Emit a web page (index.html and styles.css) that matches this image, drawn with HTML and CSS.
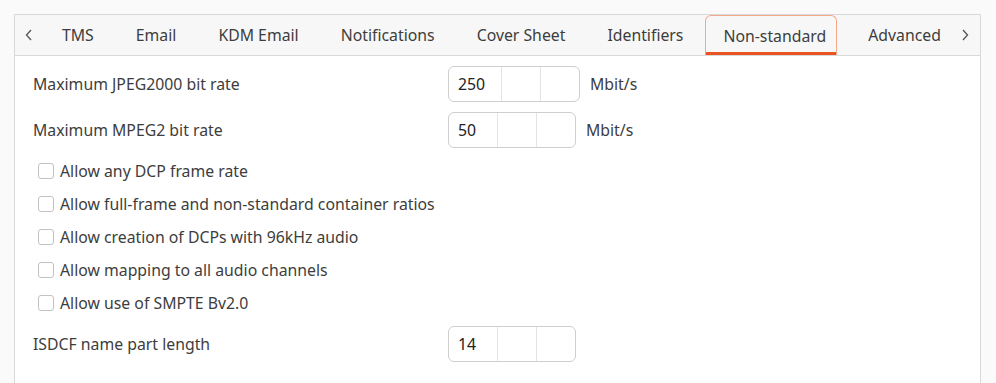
FILE: index.html
```html
<!DOCTYPE html>
<html lang="en">
<head>
  <meta charset="UTF-8" />
  <title>Preferences - Non-standard</title>
  <link rel="stylesheet" href="styles.css">
</head>
<body>
  <div class="notebook">
    <div class="tab-bar">
      <span class="scroll-arrow">
        <svg width="10" height="12" viewBox="0 0 10 12"><path d="M7 1 L2.5 6 L7 11" fill="none" stroke="#5a5a5a" stroke-width="1.4"/></svg>
      </span>
      <ul class="tabs">
        <li class="tab">TMS</li>
        <li class="tab">Email</li>
        <li class="tab">KDM Email</li>
        <li class="tab">Notifications</li>
        <li class="tab">Cover Sheet</li>
        <li class="tab">Identifiers</li>
        <li class="tab active">Non-standard</li>
        <li class="tab">Advanced</li>
      </ul>
      <span class="scroll-arrow right">
        <svg width="10" height="12" viewBox="0 0 10 12"><path d="M3 1 L7.5 6 L3 11" fill="none" stroke="#5a5a5a" stroke-width="1.4"/></svg>
      </span>
    </div>

    <div class="page">
      <div class="spin-row">
        <label class="field-label">Maximum JPEG2000 bit rate</label>
        <div class="spin wide">
          <span class="spin-entry">250</span>
          <span class="spin-btn"></span>
          <span class="spin-btn"></span>
        </div>
        <span class="unit">Mbit/s</span>
      </div>
      <div class="spin-row">
        <label class="field-label">Maximum MPEG2 bit rate</label>
        <div class="spin">
          <span class="spin-entry">50</span>
          <span class="spin-btn"></span>
          <span class="spin-btn"></span>
        </div>
        <span class="unit">Mbit/s</span>
      </div>

      <div class="checks">
        <label class="check"><span class="box"></span>Allow any DCP frame rate</label>
        <label class="check"><span class="box"></span>Allow full-frame and non-standard container ratios</label>
        <label class="check"><span class="box"></span>Allow creation of DCPs with 96kHz audio</label>
        <label class="check"><span class="box"></span>Allow mapping to all audio channels</label>
        <label class="check"><span class="box"></span>Allow use of SMPTE Bv2.0</label>
      </div>

      <div class="spin-row last">
        <label class="field-label">ISDCF name part length</label>
        <div class="spin">
          <span class="spin-entry">14</span>
          <span class="spin-btn"></span>
          <span class="spin-btn"></span>
        </div>
      </div>
    </div>
  </div>
</body>
</html>
```

FILE: styles.css
```css
* { box-sizing: border-box; }
body {
  margin: 0;
  background-color: #fafafa;
  font-family: 'Noto Sans', sans-serif;
  font-size: 15.8px;
  color: #3d3d3d;
  height: 100vh;
  overflow: hidden;
}
.notebook {
  margin: 14px 15px 0 14px;
  height: calc(100vh - 14px);
  border: 1px solid #d9d9d9;
  border-bottom: none;
  background-color: #fff;
  display: flex;
  flex-direction: column;
}
.tab-bar {
  display: flex;
  align-items: stretch;
  height: 41px;
  background-color: #f7f7f7;
  border-bottom: 1px solid #d9d9d9;
}
.scroll-arrow {
  flex: 0 0 27px;
  display: flex;
  align-items: center;
  justify-content: center;
  padding-bottom: 1px;
}
.scroll-arrow.right { flex-basis: 30px; }
.tabs {
  list-style: none;
  margin: 0;
  padding: 0;
  display: flex;
  gap: 2px;
  flex: 1;
  min-width: 0;
  overflow: hidden;
}
.tab {
  display: flex;
  align-items: center;
  padding: 0 20px;
  height: 40px;
  white-space: nowrap;
  flex-shrink: 0;
}
.tab.active {
  border: 1px solid #f3a98c;
  border-bottom: none;
  border-radius: 6px 6px 0 0;
  box-shadow: inset 0 -3px 0 #e95420;
  padding: 0 10px 0 17px;
  margin-right: 9px;
}
.page {
  flex: 1;
  padding: 10px 18px 0;
  display: flex;
  flex-direction: column;
}
.spin-row {
  display: flex;
  align-items: center;
  height: 36px;
}
.spin-row + .spin-row { margin-top: 10px; }
.spin-row.last { margin-top: 7px; }
.field-label { width: 415px; }
.spin {
  display: flex;
  width: 128px;
  height: 36px;
  border: 1px solid #cfcfcf;
  border-radius: 6px;
  background-color: #fff;
}
.spin.wide { width: 132px; }
.spin-entry {
  flex: 1;
  display: flex;
  align-items: center;
  padding-left: 9px;
  color: #222;
}
.spin-btn {
  width: 39px;
  border-left: 1px solid #e4e4e4;
}
.unit { margin-left: 10px; }
.checks {
  margin-top: 6px;
  display: flex;
  flex-direction: column;
}
.check {
  display: flex;
  align-items: center;
  height: 33px;
  padding-left: 5px;
  gap: 6px;
}
.box {
  width: 16px;
  height: 16px;
  border: 1px solid #c2c2c2;
  border-radius: 3px;
  background-color: #fff;
}
```
